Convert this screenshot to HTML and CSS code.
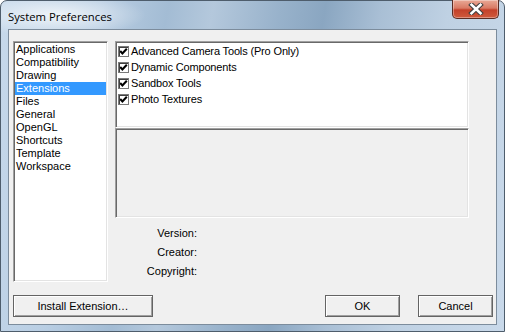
FILE: index.html
```html
<!DOCTYPE html>
<html lang="en">
<head>
    <meta charset="UTF-8">
    <title>System Preferences</title>
    <link rel="stylesheet" href="styles.css">
</head>
<body>
    <div class="window">
        <!-- Title bar -->
        <div class="titlebar">
            <span class="title">System Preferences</span>
            <div class="close-button">
                <svg width="18" height="12" viewBox="0 0 18 12">
                    <path d="M4.5 1.8 L13.5 10.2 M13.5 1.8 L4.5 10.2" stroke="#3e3e3e" stroke-width="4.6" stroke-linecap="square"/>
                    <path d="M4.5 1.8 L13.5 10.2 M13.5 1.8 L4.5 10.2" stroke="#ffffff" stroke-width="2.6" stroke-linecap="square"/>
                </svg>
            </div>
        </div>

        <!-- Client area -->
        <div class="client">
            <div class="main">
                <ul class="categories">
                    <li>Applications</li>
                    <li>Compatibility</li>
                    <li>Drawing</li>
                    <li class="selected">Extensions</li>
                    <li>Files</li>
                    <li>General</li>
                    <li>OpenGL</li>
                    <li>Shortcuts</li>
                    <li>Template</li>
                    <li>Workspace</li>
                </ul>

                <div class="details">
                    <div class="extensions">
                        <div class="ext-item"><span class="check"></span>Advanced Camera Tools (Pro Only)</div>
                        <div class="ext-item"><span class="check"></span>Dynamic Components</div>
                        <div class="ext-item"><span class="check"></span>Sandbox Tools</div>
                        <div class="ext-item"><span class="check"></span>Photo Textures</div>
                    </div>
                    <div class="description"></div>
                    <div class="fields">
                        <div class="field">Version:</div>
                        <div class="field">Creator:</div>
                        <div class="field">Copyright:</div>
                    </div>
                </div>
            </div>

            <div class="footer">
                <button class="btn btn-install">Install Extension…</button>
                <div class="footer-right">
                    <button class="btn">OK</button>
                    <button class="btn">Cancel</button>
                </div>
            </div>
        </div>
    </div>
</body>
</html>
```

FILE: styles.css
```css
html, body {
    margin: 0;
    padding: 0;
    width: 505px;
    height: 332px;
    overflow: hidden;
    background: #ffffff;
}

.window {
    box-sizing: border-box;
    width: 505px;
    height: 332px;
    border: 1px solid #4e5d6c;
    border-radius: 7px 7px 0 0;
    padding: 0 7px 6px 7px;
    display: flex;
    flex-direction: column;
    background:
        radial-gradient(ellipse 90px 22px at 55px 14px, rgba(255, 255, 255, 0.75), rgba(255, 255, 255, 0) 100%),
        linear-gradient(100deg, #c7d9eb 0%, #b9cee3 18%, #a3bcd4 30%, #b4c8dc 38%, #98b2cb 50%, #8aa6c1 58%, #a9bfd5 68%, #bfd1e3 80%, #c9d9ea 100%);
}

/* Title bar */
.titlebar {
    height: 28px;
    display: flex;
    align-items: center;
    justify-content: space-between;
    position: relative;
}

.title {
    font-family: "Open Sans", "Noto Sans", sans-serif;
    font-size: 11.3px;
    color: #000;
    margin-top: 2px;
}

.close-button {
    position: absolute;
    top: -1px;
    right: -2px;
    width: 47px;
    height: 19px;
    box-sizing: border-box;
    border: 1px solid #5b2d24;
    border-top: none;
    border-radius: 0 0 5px 5px;
    background: linear-gradient(#e9a996 0%, #d97a64 45%, #c4412a 55%, #cf5a3d 100%);
    box-shadow: inset 0 0 0 1px rgba(255, 255, 255, 0.35);
    display: flex;
    align-items: center;
    justify-content: center;
}

/* Client area */
.client {
    flex: 1;
    background: #f0f0f0;
    border: 1px solid #7c8c9c;
    padding: 11px 3px 0 4px;
    display: flex;
    flex-direction: column;
    font-family: "Liberation Sans", Arial, sans-serif;
    font-size: 11px;
    color: #000;
}

.main {
    display: flex;
    gap: 8px;
}

.categories {
    list-style: none;
    margin: 0;
    padding: 0;
    box-sizing: border-box;
    width: 95px;
    height: 241px;
    background: #fff;
    border: 1px solid;
    border-color: #a0a0a0 #ffffff #ffffff #a0a0a0;
    box-shadow: inset 1px 1px 0 #696969, inset -1px -1px 0 #e3e3e3;
    padding: 1px 1px 0 1px;
}

.categories li {
    height: 13px;
    line-height: 13px;
    padding-left: 1px;
    white-space: nowrap;
}

.categories li.selected {
    background: #3399ff;
    color: #fff;
}

.details {
    display: flex;
    flex-direction: column;
    width: 354px;
    margin-left: -1px;
}

.extensions {
    box-sizing: border-box;
    height: 87px;
    background: #fff;
    border: 1px solid;
    border-color: #a0a0a0 #ffffff #ffffff #a0a0a0;
    box-shadow: inset 1px 1px 0 #696969, inset -1px -1px 0 #e3e3e3;
    padding: 1px 2px;
    letter-spacing: -0.15px;
}

.ext-item {
    height: 16px;
    display: flex;
    align-items: center;
    gap: 2px;
    white-space: nowrap;
}

.check {
    box-sizing: border-box;
    width: 11px;
    height: 11px;
    border: 1px solid #7a7a7a;
    background: #fff url("data:image/svg+xml,%3Csvg xmlns='http://www.w3.org/2000/svg' width='9' height='9' viewBox='0 0 9 9'%3E%3Cpath d='M1.2 4.1 L3.4 6.4 L7.8 1.8' fill='none' stroke='%23000' stroke-width='2.1'/%3E%3C/svg%3E") no-repeat center;
    box-shadow: inset 1px 1px 0 #404040;
}

.description {
    box-sizing: border-box;
    height: 90px;
    background: #f0f0f0;
    border: 1px solid;
    border-color: #a0a0a0 #ffffff #ffffff #a0a0a0;
    box-shadow: inset 1px 1px 0 #696969, inset -1px -1px 0 #e3e3e3;
}

.fields {
    padding-top: 6px;
    width: 82px;
}

.field {
    height: 19px;
    line-height: 19px;
    text-align: right;
}

/* Buttons */
.footer {
    margin-top: 13px;
    display: flex;
    justify-content: space-between;
}

.footer-right {
    display: flex;
    gap: 18px;
}

.btn {
    box-sizing: border-box;
    width: 75px;
    height: 22px;
    margin: 0;
    padding: 0;
    background: #f0f0f0;
    border: 1px solid #646464;
    box-shadow: inset 1px 1px 0 #ffffff, inset -1px -1px 0 #a0a0a0;
    font-family: "Liberation Sans", Arial, sans-serif;
    font-size: 11px;
    color: #000;
}

.btn-install {
    width: 140px;
}
```
